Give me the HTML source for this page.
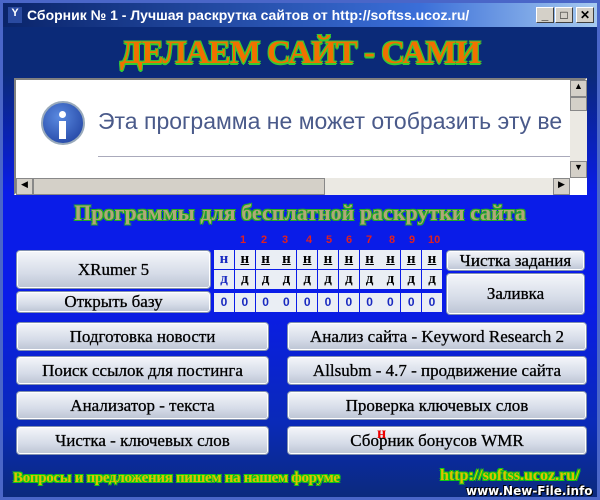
<!DOCTYPE html><html><head><meta charset="utf-8"><style>
*{margin:0;padding:0;box-sizing:border-box}
body{width:600px;height:500px;overflow:hidden;background:#7a8ab8;font-family:"Liberation Serif",serif;position:relative}
.win{position:absolute;left:0;top:0;width:600px;height:500px;border:3px solid #4a66c8;background:linear-gradient(#0b2a78 0,#0b2a78 70px,#0a1ce8 190px,#0a1ce8 300px,#0a2ab8 420px,#0b2a78 500px)}
.tb{position:absolute;left:0;top:0;width:594px;height:24px;background:linear-gradient(90deg,#0a246a,#3a6ed8 70%,#a6caf0);color:#fff;font:bold 14px "Liberation Sans",sans-serif;line-height:24px;padding-left:24px;white-space:nowrap}
.tb .ic{position:absolute;left:5px;top:4px;width:14px;height:16px;background:#2a4aa0;color:#fff;font-size:11px;line-height:12px;text-align:center}
.tbb{position:absolute;top:4px;width:18px;height:16px;background:#d4d0c8;border:1px solid;border-color:#fff #404040 #404040 #fff;color:#000;font:bold 12px "Liberation Sans";line-height:14px;text-align:center}
.a{position:absolute}
.ttl{left:0;width:594px;top:32px;text-align:center;font:bold 33px "Liberation Serif";color:#f07000;letter-spacing:-1px;text-shadow:-1px -1px 0 #3c3,1px -1px 0 #3c3,-1px 1px 0 #3c3,1px 1px 0 #3c3,0 2px 0 #3c3}
.brw{left:11px;top:75px;width:573px;height:117px;background:#fff;border:2px solid;border-color:#808080 #fff #fff #808080}
.sub{left:0;width:594px;top:197px;text-align:center;font:bold 22px "Liberation Serif";color:#b0a878;text-shadow:-1px -1px 0 #2a2,1px -1px 0 #2a2,-1px 1px 0 #2a2,1px 1px 0 #2a2}
.btn{position:absolute;background:linear-gradient(#f4f6fa,#d6dce8 60%,#bcc4d4);border-radius:4px;border:1px solid #8090b0;box-shadow:inset 0 0 0 1px #fff;text-align:center;font:17px "Liberation Serif";color:#000;white-space:nowrap;-webkit-text-stroke:0.3px #000}
.num{position:absolute;top:231px;color:#e02020;font:bold 11px "Liberation Sans"}
.cell{position:absolute;width:20px;height:19px;background:#eaeef4;font:bold 15px "Liberation Serif";text-align:center;line-height:18px;color:#000}
.ft{position:absolute;font:bold 15px "Liberation Serif";color:#e0c000;white-space:nowrap;text-shadow:-1px -1px 0 #1c1,1px -1px 0 #1c1,-1px 1px 0 #1c1,1px 1px 0 #1c1}
</style></head><body><div class="win">
<div class="tb"><span class="ic">Y</span>Сборник № 1 - Лучшая раскрутка сайтов от http://softss.ucoz.ru/
<span class="tbb" style="left:533px">_</span><span class="tbb" style="left:552px">□</span><span class="tbb" style="left:573px">✕</span></div>
<div class="a ttl">ДЕЛАЕМ САЙТ - САМИ</div>
<div class="a brw">
 <div class="a" style="left:25px;top:21px;width:44px;height:44px;border-radius:50%;background:radial-gradient(circle at 40% 35%,#5a8ae0,#1a3a9a);border:2px solid #9ab"></div>
 <div class="a" style="left:43px;top:31px;width:7px;height:7px;border-radius:50%;background:#fff"></div>
 <div class="a" style="left:43px;top:41px;width:7px;height:18px;background:#fff"></div>
 <div class="a" style="left:82px;top:28px;font:23px 'Liberation Sans',sans-serif;color:#4a5a8a;white-space:nowrap;width:472px;overflow:hidden">Эта программа не может отобразить эту ве</div>
 <div class="a" style="left:82px;top:76px;width:472px;height:1px;background:#aab"></div>
 <div class="a" style="left:554px;top:0;width:17px;height:98px;background:#ebe9e3"><div class="a" style="left:0;top:0;width:17px;height:17px;background:#d4d0c8;border:1px solid #888;font-size:9px;text-align:center">▲</div><div class="a" style="left:0;top:17px;width:17px;height:14px;background:#d4d0c8;border:1px solid #888"></div><div class="a" style="left:0;top:81px;width:17px;height:17px;background:#d4d0c8;border:1px solid #888;font-size:9px;text-align:center">▼</div></div>
 <div class="a" style="left:0;top:98px;width:554px;height:17px;background:#ebe9e3"><div class="a" style="left:0;top:0;width:17px;height:17px;background:#d4d0c8;border:1px solid #888;font-size:9px;text-align:center">◀</div><div class="a" style="left:17px;top:0;width:292px;height:17px;background:#d4d0c8;border:1px solid #888"></div><div class="a" style="left:537px;top:0;width:17px;height:17px;background:#d4d0c8;border:1px solid #888;font-size:9px;text-align:center">▶</div></div>
</div>
<div class="a sub">Программы для бесплатной раскрутки сайта</div>
<div class="num" style="left:237px">1</div><div class="num" style="left:258px">2</div><div class="num" style="left:279px">3</div><div class="num" style="left:303px">4</div><div class="num" style="left:323px">5</div><div class="num" style="left:343px">6</div><div class="num" style="left:363px">7</div><div class="num" style="left:386px">8</div><div class="num" style="left:406px">9</div><div class="num" style="left:425px">10</div>
<div id="g"></div>
<div class="btn" style="left:13px;top:247px;width:195px;height:39px;line-height:37px">XRumer 5</div>
<div class="btn" style="left:13px;top:288px;width:195px;height:22px;line-height:20px">Открыть базу</div>
<div class="btn" style="left:443px;top:247px;width:139px;height:21px;line-height:19px">Чистка задания</div>
<div class="btn" style="left:443px;top:270px;width:139px;height:42px;line-height:40px">Заливка</div>
<div class="btn" style="left:13px;top:319px;width:253px;height:29px;line-height:27px">Подготовка новости</div>
<div class="btn" style="left:13px;top:353px;width:253px;height:29px;line-height:27px">Поиск ссылок для постинга</div>
<div class="btn" style="left:13px;top:388px;width:253px;height:29px;line-height:27px">Анализатор - текста</div>
<div class="btn" style="left:13px;top:423px;width:253px;height:29px;line-height:27px">Чистка - ключевых слов</div>
<div class="btn" style="left:284px;top:319px;width:300px;height:29px;line-height:27px">Анализ сайта - Keyword Research 2</div>
<div class="btn" style="left:284px;top:353px;width:300px;height:29px;line-height:27px">Allsubm - 4.7 - продвижение сайта</div>
<div class="btn" style="left:284px;top:388px;width:300px;height:29px;line-height:27px">Проверка ключевых слов</div>
<div class="btn" style="left:284px;top:423px;width:300px;height:29px;line-height:27px">Сборник бонусов WMR</div>
<div class="a" style="left:374px;top:422px;color:#e00;font:bold 16px 'Liberation Serif'">н</div>
<div class="ft" style="left:10px;top:467px;letter-spacing:-0.3px">Вопросы и предложения пишем на нашем форуме</div>
<div class="ft" style="left:437px;top:464px;font-size:16px">http://softss.ucoz.ru/</div>
<div class="a" style="left:463px;top:481px;color:#fff;white-space:nowrap;font:bold 12px 'DejaVu Sans';text-shadow:1px 1px 0 #000,-1px -1px 0 #000">www.New-File.info</div>
</div>
<script>
var g=document.getElementById('g'),h='';
for(var i=0;i<11;i++){var x=211+i*20.8;var c=i==0?'#1a2ac0':'#000';
h+='<div class="cell" style="left:'+x+'px;top:247px;color:'+c+';'+(i>0?'text-decoration:underline':'')+'">н</div>';
h+='<div class="cell" style="left:'+x+'px;top:267px;color:'+c+';text-decoration:underline">д</div>';
h+='<div class="cell" style="left:'+x+'px;top:290px;color:#1a2ac0;font-family:Liberation Sans;font-size:12px">0</div>';}
g.innerHTML=h;
</script>
</body></html>
